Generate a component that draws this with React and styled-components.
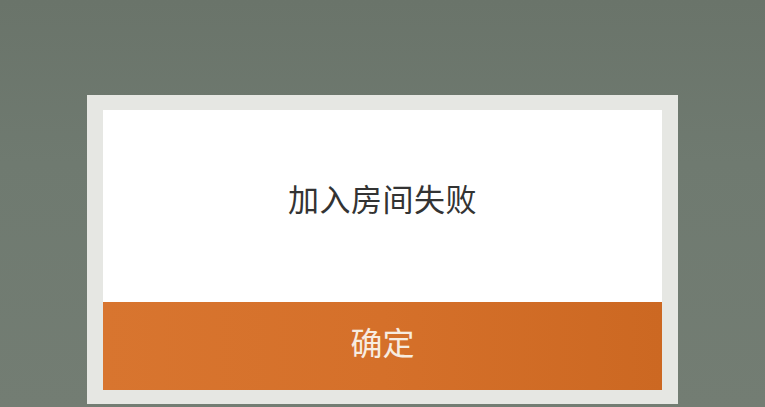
import React from "react";
import { styled, createGlobalStyle } from "styled-components";

const GlobalStyle = createGlobalStyle`
  html, body {
    margin: 0;
    padding: 0;
    background: #6f796f;
    font-family: "Noto Sans CJK SC", "Noto Sans", sans-serif;
  }
`;

const Page = styled.div`
  width: 765px;
  height: 407px;
  box-sizing: border-box;
  padding: 95px 0 0 87px;
  background: linear-gradient(180deg, #6a746a 0%, #6f7a70 40%, #737d73 100%);
  overflow: hidden;
`;

const Frame = styled.div`
  width: 591px;
  box-sizing: border-box;
  background: #e6e7e3;
  padding: 15px 16px 14px 16px;
`;

const Body = styled.div`
  height: 192px;
  background: #ffffff;
  display: flex;
  align-items: center;
  justify-content: center;
`;

const Message = styled.p`
  margin: 0;
  font-size: 31px;
  color: #333333;
  letter-spacing: 0.5px;
  padding-bottom: 18px;
`;

const ConfirmButton = styled.button`
  display: flex;
  align-items: center;
  justify-content: center;
  width: 100%;
  height: 88px;
  border: none;
  margin: 0;
  padding: 0 0 10px 0;
  background: linear-gradient(90deg, #d8752f 0%, #d5702a 50%, #cc6822 100%);
  color: #f7ece0;
  font-family: inherit;
  font-size: 32px;
  cursor: pointer;
`;

const App = () => {
  return (
    <>
      <GlobalStyle />
      <Page>
        <Frame>
          <Body>
            <Message>加入房间失败</Message>
          </Body>
          <ConfirmButton>确定</ConfirmButton>
        </Frame>
      </Page>
    </>
  );
};

export default App;
